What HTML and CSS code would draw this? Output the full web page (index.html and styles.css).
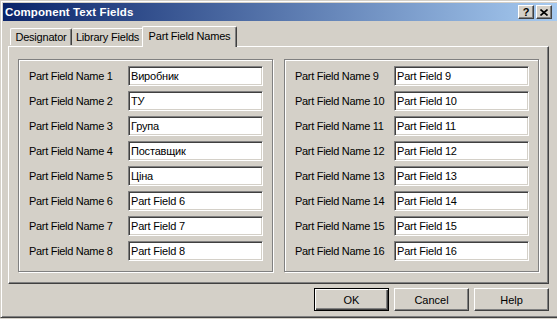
FILE: index.html
```html
<!DOCTYPE html>
<html lang="uk">
<head>
    <meta charset="UTF-8">
    <title>Component Text Fields</title>
    <link rel="stylesheet" href="styles.css">
</head>
<body>
    <div class="window">
        <div class="titlebar">
            <span class="caption">Component Text Fields</span>
            <div class="caption-buttons">
                <div class="cap-btn help-btn">?</div>
                <div class="cap-btn close-btn">
                    <svg width="8" height="7" viewBox="0 0 8 7"><path d="M0.5 0.5 L7.5 6.5 M7.5 0.5 L0.5 6.5" stroke="#000" stroke-width="1.6"/></svg>
                </div>
            </div>
        </div>

        <div class="content">
            <div class="tabs">
                <div class="tab tab-designator">Designator</div>
                <div class="tab tab-library">Library Fields</div>
                <div class="tab active">Part Field Names</div>
            </div>
            <div class="panel">
                <div class="group">
                    <label>Part Field Name 1</label><input type="text" value="Виробник">
                    <label>Part Field Name 2</label><input type="text" value="ТУ">
                    <label>Part Field Name 3</label><input type="text" value="Група">
                    <label>Part Field Name 4</label><input type="text" value="Поставщик">
                    <label>Part Field Name 5</label><input type="text" value="Ціна">
                    <label>Part Field Name 6</label><input type="text" value="Part Field 6">
                    <label>Part Field Name 7</label><input type="text" value="Part Field 7">
                    <label>Part Field Name 8</label><input type="text" value="Part Field 8">
                </div>
                <div class="group">
                    <label>Part Field Name 9</label><input type="text" value="Part Field 9">
                    <label>Part Field Name 10</label><input type="text" value="Part Field 10">
                    <label>Part Field Name 11</label><input type="text" value="Part Field 11">
                    <label>Part Field Name 12</label><input type="text" value="Part Field 12">
                    <label>Part Field Name 13</label><input type="text" value="Part Field 13">
                    <label>Part Field Name 14</label><input type="text" value="Part Field 14">
                    <label>Part Field Name 15</label><input type="text" value="Part Field 15">
                    <label>Part Field Name 16</label><input type="text" value="Part Field 16">
                </div>
            </div>
            <div class="buttons">
                <button class="btn default">OK</button>
                <button class="btn">Cancel</button>
                <button class="btn">Help</button>
            </div>
        </div>
    </div>
</body>
</html>
```

FILE: styles.css
```css
* {
    box-sizing: border-box;
}
body {
    margin: 0;
    width: 557px;
    height: 319px;
    overflow: hidden;
    background-color: #d4d0c8;
    font-family: "Liberation Sans", Arial, sans-serif;
    font-size: 11px;
    color: #000;
}
.window {
    width: 560px;
    height: 318px;
    background: #d4d0c8;
    border: 1px solid;
    border-color: #d4d0c8 #404040 #404040 #d4d0c8;
    box-shadow: inset 1px 1px #fff, inset -1px -1px #808080;
    padding: 2px;
    display: flex;
    flex-direction: column;
}
.titlebar {
    height: 18px;
    background: linear-gradient(to right, #0a246a, #a6caf0);
    display: flex;
    align-items: center;
    padding: 0 5px 0 2px;
}
.caption {
    color: #fff;
    font-weight: bold;
    font-size: 11.5px;
    letter-spacing: 0.1px;
}
.caption-buttons {
    margin-left: auto;
    display: flex;
    gap: 2px;
}
.cap-btn {
    width: 16px;
    height: 14px;
    background: #d4d0c8;
    border: 1px solid;
    border-color: #fff #404040 #404040 #fff;
    box-shadow: inset -1px -1px #808080;
    display: flex;
    align-items: center;
    justify-content: center;
    font-weight: bold;
    font-size: 11px;
    line-height: 1;
}
.content {
    padding: 5px 0 0 5px;
    display: flex;
    flex-direction: column;
}
.tabs {
    display: flex;
    align-items: flex-end;
    padding-left: 2px;
    height: 20px;
    position: relative;
    z-index: 1;
}
.tab {
    height: 17px;
    background: #d4d0c8;
    border-top: 1px solid #fff;
    border-left: 1px solid #fff;
    border-right: 1px solid #404040;
    border-radius: 2px 2px 0 0;
    box-shadow: inset -1px 0 #808080;
    display: flex;
    align-items: center;
    justify-content: center;
    margin-bottom: 1px;
    letter-spacing: -0.2px;
}
.tab-designator {
    width: 62px;
}
.tab-library {
    width: 72px;
    border-left: none;
}
.tab.active {
    width: 95px;
    height: 21px;
    margin: 0 0 -1px -2px;
    padding-bottom: 2px;
}
.panel {
    width: 541px;
    height: 238px;
    border: 1px solid;
    border-color: #fff #404040 #404040 #fff;
    box-shadow: inset -1px -1px #808080;
    padding: 12px 0 0 9px;
    display: flex;
    gap: 11px;
}
.group {
    width: 255px;
    height: 213px;
    border: 1px solid #808080;
    box-shadow: inset 1px 1px #fff, 1px 1px #fff;
    padding: 6px 0 0 10px;
    display: grid;
    grid-template-columns: 99px 135px;
    grid-auto-rows: 20px;
    row-gap: 5px;
    align-items: center;
    align-content: start;
}
.group label {
    letter-spacing: -0.3px;
}
.group input {
    width: 135px;
    height: 20px;
    margin: 0;
    padding: 0 2px;
    font-family: inherit;
    font-size: 11px;
    letter-spacing: -0.2px;
    color: #000;
    background: #fff;
    border: 1px solid;
    border-color: #808080 #fff #fff #808080;
    box-shadow: inset 1px 1px #404040, inset -1px -1px #d4d0c8;
    outline: none;
}
.buttons {
    display: flex;
    justify-content: flex-end;
    gap: 5px;
    width: 541px;
    margin-top: 4px;
}
.btn {
    width: 75px;
    height: 23px;
    margin: 0;
    padding: 0;
    font-family: inherit;
    font-size: 11px;
    color: #000;
    background: #d4d0c8;
    border: 1px solid;
    border-color: #fff #404040 #404040 #fff;
    box-shadow: inset -1px -1px #808080;
}
.btn.default {
    border: 1px solid #000;
    box-shadow: inset 1px 1px #fff, inset -1px -1px #404040, inset -2px -2px #808080;
}
```
